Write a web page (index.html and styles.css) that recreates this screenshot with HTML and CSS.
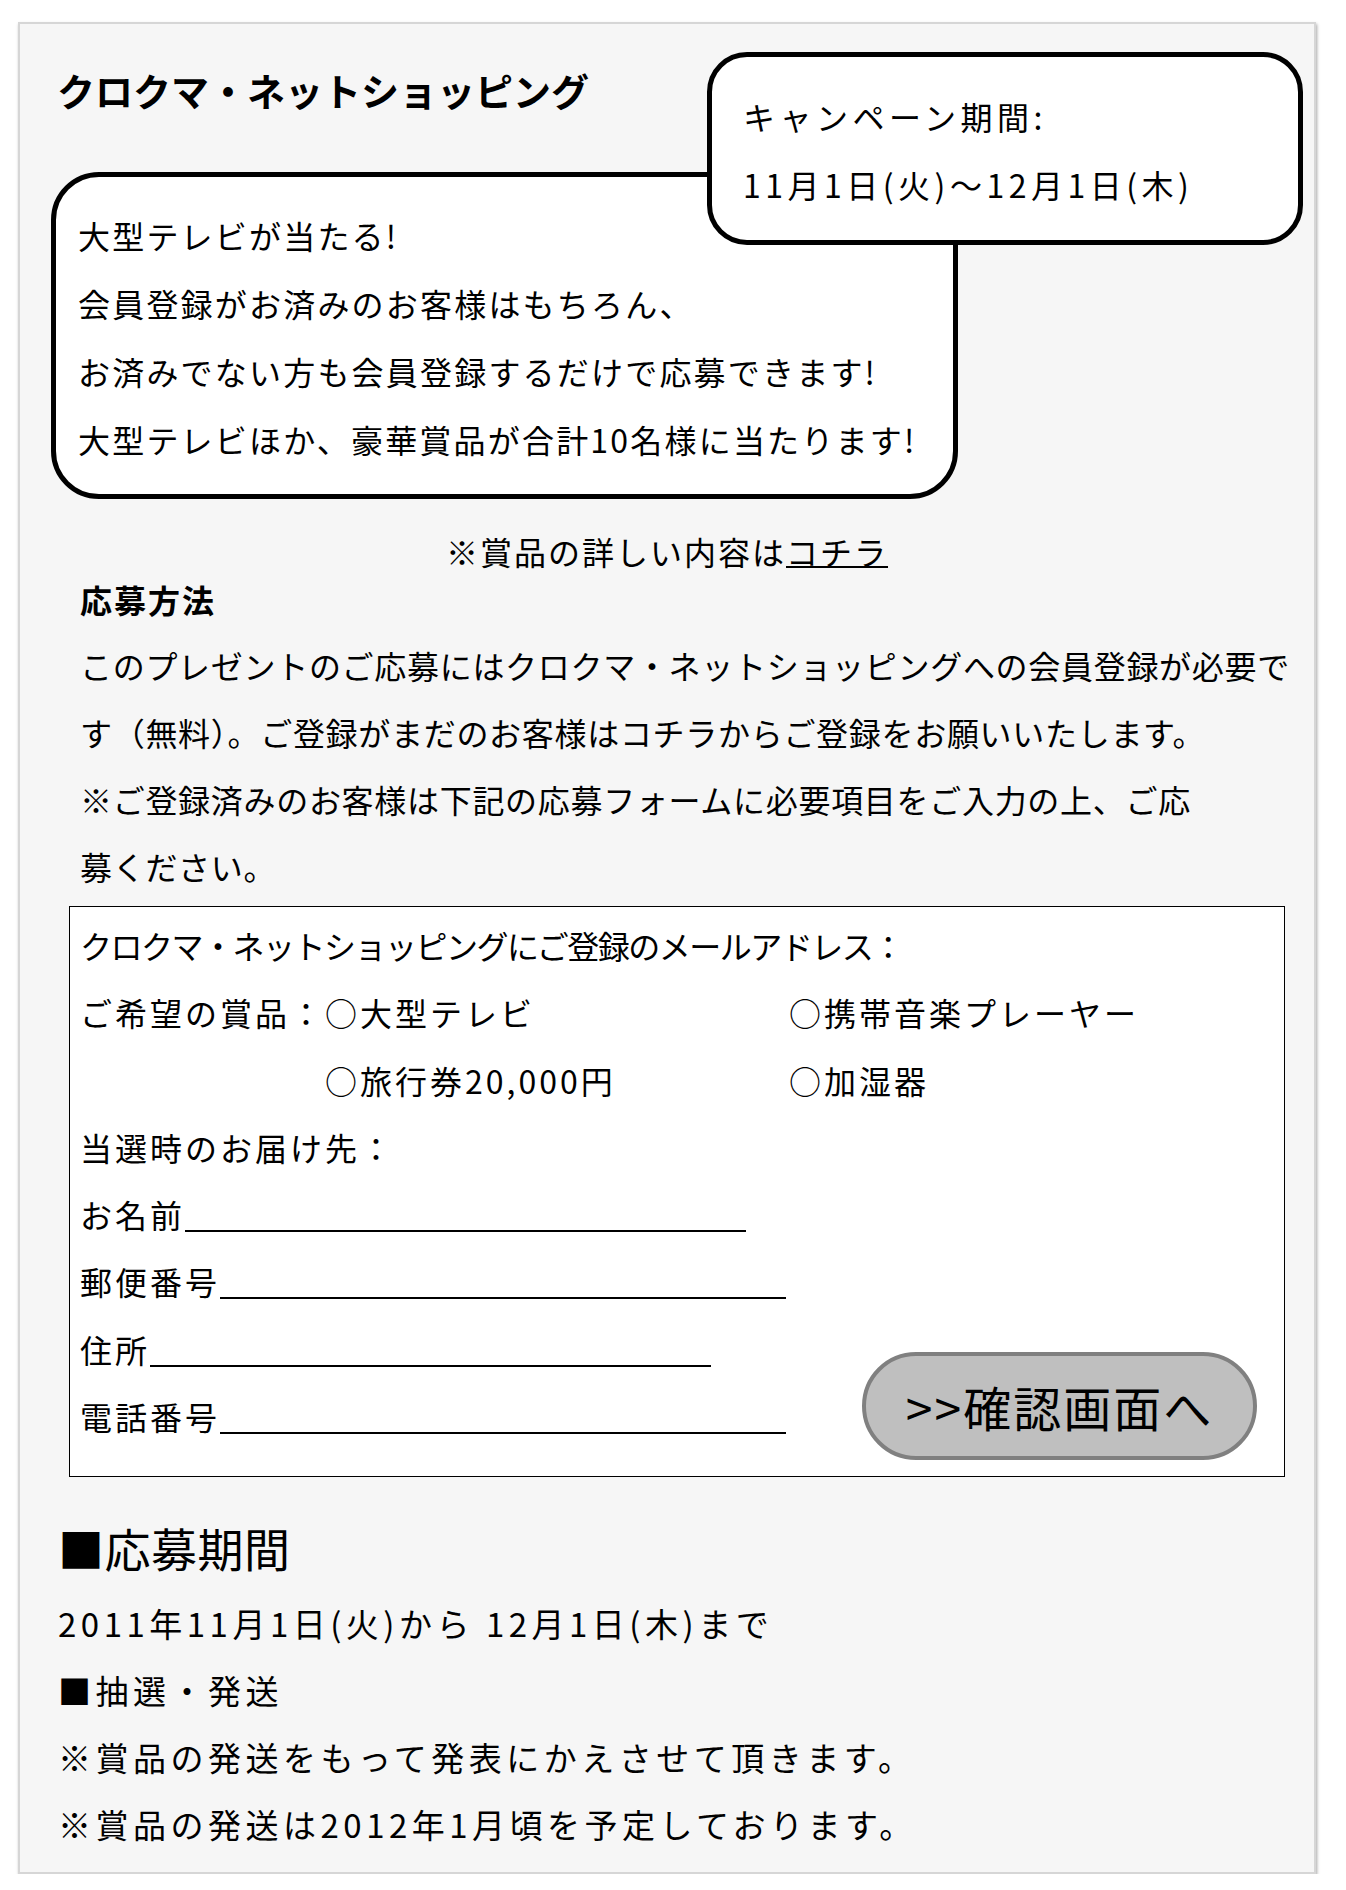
FILE: index.html
```html
<!DOCTYPE html>
<html lang="ja">
  <head>
    <meta charset="utf-8">
    <title>クロクマ・ネットショッピング キャンペーン</title>
    <link rel="stylesheet" href="styles.css">
  </head>
  <body>
    <div class="page">
      <div class="top">
        <h1 class="title">クロクマ・ネットショッピング</h1>
        <div class="campaign">
          キャンペーン期間:<br>
          11月1日(火)～12月1日(木)
        </div>
        <div class="bubble">
          大型テレビが当たる!<br>
          会員登録がお済みのお客様はもちろん、<br>
          お済みでない方も会員登録するだけで応募できます!<br>
          大型テレビほか、豪華賞品が合計10名様に当たります!
        </div>
      </div>

      <p class="prize-note">※賞品の詳しい内容は<a href="#">コチラ</a></p>

      <h2 class="method-title">応募方法</h2>
      <p class="method">
        このプレゼントのご応募にはクロクマ・ネットショッピングへの会員登録が必要で<br>
        す（無料）。ご登録がまだのお客様はコチラからご登録をお願いいたします。<br>
        ※ご登録済みのお客様は下記の応募フォームに必要項目をご入力の上、ご応<br>
        募ください。
      </p>

      <form class="entry">
        <div class="mail">クロクマ・ネットショッピングにご登録のメールアドレス：</div>
        <div class="prizes">
          <span>ご希望の賞品：</span>
          <span>○大型テレビ</span>
          <span>○携帯音楽プレーヤー</span>
          <span></span>
          <span>○旅行券20,000円</span>
          <span>○加湿器</span>
        </div>
        <div>当選時のお届け先：</div>
        <div class="fields-row">
          <div class="fields">
            <div>お名前<span class="blank w561"></span></div>
            <div>郵便番号<span class="blank w566"></span></div>
            <div>住所<span class="blank w561"></span></div>
            <div>電話番号<span class="blank w566"></span></div>
          </div>
          <button type="button" class="submit">&gt;&gt;確認画面へ</button>
        </div>
      </form>

      <div class="period">
        <h2>■応募期間</h2>
        <p>2011年11月1日(火)から 12月1日(木)まで</p>
        <p>■抽選・発送</p>
        <p>※賞品の発送をもって発表にかえさせて頂きます。</p>
        <p>※賞品の発送は2012年1月頃を予定しております。</p>
      </div>
    </div>
  </body>
</html>
```

FILE: styles.css
```css
body {
  margin: 0;
  background: #fff;
  color: #000;
  font-family: "Noto Sans CJK JP", sans-serif;
}

.page {
  box-sizing: border-box;
  width: 1298px;
  height: 1852px;
  margin: 22px 0 0 18px;
  background: #f6f6f6;
  border: 2px solid #d6d6d6;
  box-shadow: 1px 2px 3px rgba(0, 0, 0, 0.35);
}

/* title + the two speech boxes, the campaign box sits over the big one */
.top {
  display: grid;
  grid-template-columns: 656px 251px 345px;
  grid-template-rows: 120px 73px 254px;
  margin: 28px 0 0 31px;
}

.title {
  grid-column: 1 / 2;
  grid-row: 1 / 2;
  margin: 18px 0 0 6px;
  font-size: 38px;
  line-height: 40px;
  font-weight: bold;
  white-space: nowrap;
}

.campaign {
  grid-column: 2 / 4;
  grid-row: 1 / 3;
  z-index: 1;
  background: #fff;
  border: 5px solid #000;
  border-radius: 40px;
  padding: 25px 0 0 31px;
  font-size: 32px;
  line-height: 68px;
  letter-spacing: 4.5px;
  white-space: nowrap;
}

.bubble {
  grid-column: 1 / 3;
  grid-row: 2 / 4;
  background: #fff;
  border: 5px solid #000;
  border-radius: 48px;
  padding: 24px 0 0 22px;
  font-size: 32px;
  line-height: 68px;
  letter-spacing: 2.2px;
  white-space: nowrap;
}

.prize-note {
  margin: 28px 0 0;
  text-align: center;
  font-size: 32px;
  line-height: 48px;
  letter-spacing: 2px;
}

.prize-note a {
  color: #000;
  text-decoration: underline;
  text-decoration-thickness: 2px;
}

.method-title {
  margin: 0;
  padding-left: 60px;
  font-size: 32px;
  line-height: 48px;
  font-weight: bold;
  letter-spacing: 2px;
}

.method {
  margin: 9px 0 0;
  padding-left: 60px;
  font-size: 32px;
  line-height: 67px;
  letter-spacing: 0.7px;
  white-space: nowrap;
}

.entry {
  box-sizing: border-box;
  width: 1216px;
  height: 571px;
  margin: 6px 0 0 49px;
  padding: 5px 0 0 10px;
  background: #fff;
  border: 1px solid #000;
  font-size: 32px;
  line-height: 67.3px;
  letter-spacing: 3px;
  white-space: nowrap;
}

.mail {
  letter-spacing: -1.5px;
}

.prizes {
  display: grid;
  grid-template-columns: 245px 464px 1fr;
}

.fields-row {
  display: flex;
  align-items: flex-end;
}

.fields {
  flex: none;
}

.blank {
  display: inline-block;
  height: 20px;
  margin-bottom: -4px;
  border-bottom: 2px solid #000;
}

.w561 {
  width: 561px;
}

.w566 {
  width: 566px;
}

.submit {
  box-sizing: border-box;
  width: 395px;
  height: 108px;
  margin: 0 27px -10px auto;
  padding: 0;
  background: #bfbfbf;
  border: 4px solid #808080;
  border-radius: 54px;
  color: #000;
  font-family: inherit;
  font-size: 48px;
  line-height: 1;
  letter-spacing: 2px;
  cursor: pointer;
}

.period {
  margin-top: 37px;
  padding-left: 38px;
  font-size: 33px;
  line-height: 67px;
  letter-spacing: 4.5px;
}

.period h2 {
  margin: 0 0 9px;
  font-size: 46px;
  font-weight: normal;
  line-height: 67px;
  letter-spacing: 0.5px;
}

.period p {
  margin: 0;
}
```
